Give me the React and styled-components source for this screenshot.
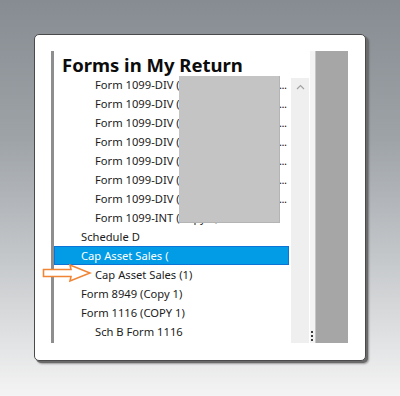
import styled, { createGlobalStyle } from 'styled-components';

const GlobalStyle = createGlobalStyle`
  html, body {
    margin: 0;
    padding: 0;
  }
  body {
    width: 400px;
    height: 396px;
    overflow: hidden;
    font-family: "Noto Sans", "Open Sans", sans-serif;
    background: linear-gradient(180deg, #878c92 0%, #9ea3a8 35%, #c4c7ca 65%, #f4f4f4 100%);
  }
`;

const Page = styled.div`
  width: 400px;
  height: 396px;
  padding: 34px 0 0 34px;
  box-sizing: border-box;
`;

const Card = styled.div`
  position: relative;
  width: 332px;
  height: 327px;
  box-sizing: border-box;
  background: #ffffff;
  border: 1.5px solid #4a4a4a;
  border-radius: 5px;
  box-shadow: 2px 2px 0 #6a6a6a, 3px 3px 2px rgba(0, 0, 0, 0.35);
  padding: 16px 17px 17px 16px;
  display: flex;
`;

const Pane = styled.div`
  width: 258px;
  border-left: 3px solid #8e8e8e;
  display: flex;
  flex-direction: column;
`;

const Title = styled.h1`
  margin: 0;
  padding: 5px 0 0 8px;
  height: 24px;
  box-sizing: border-box;
  font-size: 18.5px;
  line-height: 1;
  font-weight: 700;
  color: #0c0c0c;
  white-space: nowrap;
`;

const Body = styled.div`
  position: relative;
  flex: 1;
  display: flex;
  gap: 2px;
`;

const List = styled.ul`
  list-style: none;
  margin: 0;
  padding: 0;
  width: 235px;
`;

const Row = styled.li`
  height: 19px;
  box-sizing: border-box;
  display: flex;
  padding-left: ${p => (p.$level ? 40 : 26)}px;
  padding-right: 1px;
  font-size: 11.2px;
  line-height: 18px;
  color: ${p => (p.$selected ? '#ffffff' : '#1b1b1b')};
  background: ${p => (p.$selected ? '#019be6' : 'transparent')};
  border: 1px solid ${p => (p.$selected ? '#0b74d4' : 'transparent')};
  white-space: nowrap;
`;

const More = styled.span`
  margin-left: auto;
  width: 8px;
  letter-spacing: -0.5px;
`;

const Scrollbar = styled.div`
  margin-top: 3px;
  width: 18px;
  background: #efefef;
  display: flex;
  justify-content: center;
  padding-top: 6px;
  box-sizing: border-box;
`;

const Strip = styled.div`
  width: 5px;
  background: #f3f3f3;
  display: flex;
  flex-direction: column;
  justify-content: flex-end;
  align-items: flex-start;
  padding-bottom: 2px;
`;

const Grip = styled.div`
  display: flex;
  flex-direction: column;
  gap: 2px;
  margin-left: 1px;

  span {
    width: 2px;
    height: 2px;
    background: #3a3a3a;
  }
`;

const SideColumn = styled.div`
  width: 33px;
  background: #a6a6a6;
  border-left: 1px solid #c6c6c6;
  box-sizing: border-box;
`;

const Redaction = styled.div`
  position: absolute;
  left: 125px;
  top: 1px;
  width: 101px;
  height: 147px;
  background: #c4c4c4;
  border-right: 1px solid #b4b4b4;
  border-bottom: 1px solid #b4b4b4;
  box-sizing: border-box;
`;

const Arrow = styled.svg`
  position: absolute;
  left: 7px;
  top: 229px;
`;

const rows = [
  { text: 'Form 1099-DIV (Copy 1)', level: 1, more: true },
  { text: 'Form 1099-DIV (Copy 2)', level: 1, more: true },
  { text: 'Form 1099-DIV (Copy 3)', level: 1, more: true },
  { text: 'Form 1099-DIV (Copy 4)', level: 1, more: true },
  { text: 'Form 1099-DIV (Copy 5)', level: 1, more: true },
  { text: 'Form 1099-DIV (Copy 6)', level: 1, more: true },
  { text: 'Form 1099-DIV (Copy 7)', level: 1, more: true },
  { text: 'Form 1099-INT (Copy 1)', level: 1 },
  { text: 'Schedule D', level: 0 },
  { text: 'Cap Asset Sales (', level: 0, selected: true },
  { text: 'Cap Asset Sales (1)', level: 1 },
  { text: 'Form 8949 (Copy 1)', level: 0 },
  { text: 'Form 1116 (COPY 1)', level: 0 },
  { text: 'Sch B Form 1116', level: 1 },
];

export default function App() {
  return (
    <Page>
      <GlobalStyle />
      <Card>
        <Pane>
          <Title>Forms in My Return</Title>
          <Body>
            <List>
              {rows.map((r, i) => (
                <Row key={i} $level={r.level} $selected={r.selected}>
                  <span>{r.text}</span>
                  {r.more && <More>...</More>}
                </Row>
              ))}
            </List>
            <Scrollbar>
              <svg width="9" height="6" viewBox="0 0 9 6">
                <path d="M1 5 L4.5 1.5 L8 5" fill="none" stroke="#a2a2a2" strokeWidth="1.2" />
              </svg>
            </Scrollbar>
            <Redaction />
          </Body>
        </Pane>
        <Strip>
          <Grip>
            <span />
            <span />
            <span />
          </Grip>
        </Strip>
        <SideColumn />
        <Arrow width="50" height="19" viewBox="0 0 50 19">
          <path
            d="M1.5 5.5 L29 5.5 L28 1 L48 9 L28 17 L29 12.5 L1.5 12.5 Z"
            fill="#ffffff"
            stroke="#f08536"
            strokeWidth="1.6"
            strokeLinejoin="miter"
          />
        </Arrow>
      </Card>
    </Page>
  );
}
